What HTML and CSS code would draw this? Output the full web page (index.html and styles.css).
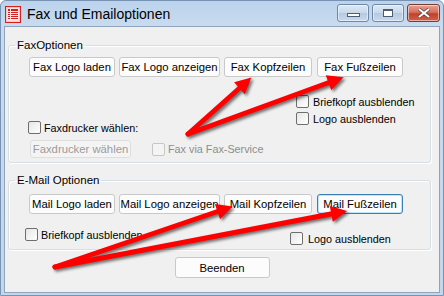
FILE: index.html
```html
<!DOCTYPE html>
<html lang="de">
    <head>
        <meta charset="UTF-8" />
        <title>Fax und Emailoptionen</title>
        <link rel="stylesheet" href="styles.css">
    </head>
    <body>
        <div class="window">
            <div class="titlebar">
                <svg class="app-icon" width="16" height="17" viewBox="0 0 16 17">
                    <rect x="0.5" y="0.5" width="15" height="16" fill="#f4c6c6" stroke="#d42020" />
                    <rect x="2" y="2" width="12" height="13" fill="#fbe3e3" />
                    <g fill="#d42020">
                        <rect x="3" y="3" width="2" height="2" />
                        <rect x="6" y="3" width="7" height="2" />
                        <rect x="3" y="6" width="2" height="1" />
                        <rect x="6" y="6" width="7" height="1" />
                        <rect x="3" y="8" width="2" height="1" />
                        <rect x="6" y="8" width="7" height="1" />
                        <rect x="3" y="10" width="2" height="1" />
                        <rect x="6" y="10" width="7" height="1" />
                        <rect x="3" y="12" width="2" height="1" />
                        <rect x="6" y="12" width="7" height="1" />
                    </g>
                </svg>
                <span class="title">Fax und Emailoptionen</span>
                <div class="controls">
                    <span class="ctl"><span class="glyph-min"></span></span>
                    <span class="ctl"><span class="glyph-max"></span></span>
                    <span class="ctl close">
                        <svg width="14" height="10" viewBox="0 0 14 10">
                            <path d="M2 1 L12 9 M12 1 L2 9" stroke="#4a3a3a" stroke-width="3.4" />
                            <path d="M2 1 L12 9 M12 1 L2 9" stroke="#ffffff" stroke-width="2.2" />
                        </svg>
                    </span>
                </div>
            </div>

            <div class="client">
                <fieldset class="group fax">
                    <legend>FaxOptionen</legend>
                    <div class="btn-row">
                        <button class="w-laden">Fax Logo laden</button>
                        <button class="w-anz">Fax Logo anzeigen</button>
                        <button class="w-kopf">Fax Kopfzeilen</button>
                        <button class="w-fuss">Fax Fußzeilen</button>
                    </div>
                    <div class="lower fax-lower">
                        <div class="printer">
                            <label class="check"><input type="checkbox" />Faxdrucker wählen:</label>
                            <div class="printer-row">
                                <button class="small" disabled>Faxdrucker wählen</button>
                                <label class="check disabled"><input type="checkbox" disabled />Fax via Fax-Service</label>
                            </div>
                        </div>
                        <div class="hide-opts">
                            <label class="check"><input type="checkbox" />Briefkopf ausblenden</label>
                            <label class="check"><input type="checkbox" />Logo ausblenden</label>
                        </div>
                    </div>
                </fieldset>

                <fieldset class="group mail">
                    <legend>E-Mail Optionen</legend>
                    <div class="btn-row">
                        <button class="w-laden">Mail Logo laden</button>
                        <button class="w-anz">Mail Logo anzeigen</button>
                        <button class="w-kopf">Mail Kopfzeilen</button>
                        <button class="w-fuss focus">Mail Fußzeilen</button>
                    </div>
                    <div class="lower mail-lower">
                        <label class="check brief"><input type="checkbox" />Briefkopf ausblenden</label>
                        <label class="check logo"><input type="checkbox" />Logo ausblenden</label>
                    </div>
                </fieldset>

                <div class="footer">
                    <button class="close-btn">Beenden</button>
                </div>
            </div>

            <svg class="arrows" width="444" height="296" viewBox="0 0 444 296">
                <defs>
                    <marker id="head" viewBox="0 0 10 10" refX="3" refY="5" markerWidth="3.8" markerHeight="3.2" orient="auto">
                        <path d="M0 0 L10 5 L0 10 Z" fill="#ff0000" />
                    </marker>
                </defs>
                <g class="arrow-set">
                    <line x1="188" y1="134" x2="243" y2="85" marker-end="url(#head)" />
                    <line x1="188" y1="134" x2="333" y2="81" marker-end="url(#head)" />
                    <line x1="55" y1="267" x2="222" y2="210" marker-end="url(#head)" />
                    <line x1="55" y1="267" x2="336" y2="213" marker-end="url(#head)" />
                </g>
            </svg>
        </div>
    </body>
</html>
```

FILE: styles.css
```css
html,
body {
    margin: 0;
    padding: 0;
    background: #ffffff;
}

body {
    font-family: "Liberation Sans", Arial, sans-serif;
    font-size: 10.8px;
    color: #000;
}

.window {
    position: relative;
    width: 444px;
    height: 296px;
    box-sizing: border-box;
    border: 1px solid #7893b4;
    border-radius: 6px 6px 0 0;
    background: linear-gradient(#bcd3ec 0px, #c9dbef 26px, #c2d6ec 100%);
    padding: 0 3px 2px 3px;
    display: flex;
    flex-direction: column;
    overflow: hidden;
}

/* Titelleiste */
.titlebar {
    height: 25px;
    display: flex;
    align-items: center;
}

.app-icon {
    margin-left: 1px;
    margin-top: 1px;
}

.title {
    margin-left: 6px;
    font-size: 14px;
    color: #000;
}

.controls {
    margin-left: auto;
    display: flex;
    gap: 3px;
    align-self: flex-start;
    margin-top: 3px;
}

.ctl {
    width: 30px;
    height: 16px;
    border: 1px solid #6f88a8;
    border-radius: 3px;
    background: linear-gradient(#dde8f4 0%, #c7d8ec 50%, #b4c9e2 51%, #c8d9ee 100%);
    display: flex;
    align-items: center;
    justify-content: center;
    box-shadow: inset 0 0 0 1px rgba(255, 255, 255, 0.5);
}

.ctl.close {
    width: 31px;
    border-color: #7a3b33;
    background: linear-gradient(#e8a093 0%, #d8705e 45%, #c2412b 55%, #d2604a 100%);
}

.glyph-min {
    width: 11px;
    height: 2px;
    margin-top: 4px;
    background: #fff;
    border: 1px solid #4e5d70;
}

.glyph-max {
    width: 8px;
    height: 5px;
    border: 1px solid #4e5d70;
    border-top-width: 2px;
    background: #fff;
}

/* Clientbereich */
.client {
    flex: 1;
    background: #f0f0f0;
    border: 1px solid #8fa3ba;
    display: flex;
    flex-direction: column;
}

.group {
    margin: 11px 8px 0 3px;
    padding: 0 0 4px 0;
    border: 1px solid #d5dfe5;
    border-radius: 3px;
    min-width: 0;
    box-shadow: inset 1px 1px 0 #fff, 1px 1px 0 #fff;
}

.group legend {
    margin-left: 6px;
    padding: 0 2px;
    font-size: 11.5px;
    line-height: 14px;
}

.group.mail {
    margin-top: 10px;
}

.btn-row {
    display: flex;
    gap: 4px;
    margin: 5px 0 0 20px;
}

.mail .btn-row {
    margin-top: 7px;
}

button {
    font-family: "Liberation Sans", Arial, sans-serif;
    font-size: 11.3px;
    height: 20px;
    padding: 0;
    white-space: nowrap;
    background: #fcfcfc;
    border: 1px solid #c9c9c9;
    border-radius: 3px;
    color: #000;
}

.w-laden {
    width: 86px;
}

.w-anz {
    width: 101px;
}

.w-kopf {
    width: 88px;
}

.w-fuss {
    width: 86px;
    margin-left: 1px;
}

button.focus {
    border-color: #3c7fb1;
    box-shadow: inset 0 0 0 1px #bfe3f7;
}

button.small {
    width: 101px;
    height: 18px;
    color: #9b9b9b;
    background: #f4f4f4;
    border-color: #dedede;
}

/* Checkboxen */
.check {
    display: flex;
    align-items: center;
    gap: 3px;
    height: 13px;
    white-space: nowrap;
}

.check input {
    appearance: none;
    -webkit-appearance: none;
    margin: 0;
    width: 13px;
    height: 13px;
    box-sizing: border-box;
    border: 1px solid #6e6e6e;
    border-radius: 2px;
    background: linear-gradient(135deg, #e6e6e6, #ffffff);
}

.check.disabled {
    color: #8d8d8d;
}

.check.disabled input {
    border-color: #c6c6c6;
    background: #f4f4f4;
}

.lower {
    display: grid;
    align-items: start;
}

.fax-lower {
    grid-template-columns: 287px auto;
}

.printer {
    margin: 44px 0 0 19px;
    display: flex;
    flex-direction: column;
    gap: 6px;
}

.printer-row {
    display: flex;
    align-items: center;
    margin-left: 2px;
    gap: 21px;
}

.hide-opts {
    margin-top: 18px;
    display: flex;
    flex-direction: column;
    gap: 4px;
}

.hide-opts .check {
    gap: 4px;
}

.mail-lower {
    grid-template-columns: 281px auto;
}

.mail-lower .brief {
    margin: 14px 0 0 16px;
}

.mail-lower .logo {
    margin-top: 18px;
    gap: 5px;
}

.footer {
    display: flex;
    justify-content: center;
    margin-top: 7px;
}

.close-btn {
    width: 95px;
    height: 21px;
}

/* Pfeile */
.arrows {
    position: absolute;
    left: -1px;
    top: -1px;
    pointer-events: none;
}

.arrow-set {
    stroke: #ff0000;
    stroke-width: 5;
    stroke-linecap: round;
    filter: drop-shadow(2px 2px 1.5px rgba(0, 0, 0, 0.55));
}
```
